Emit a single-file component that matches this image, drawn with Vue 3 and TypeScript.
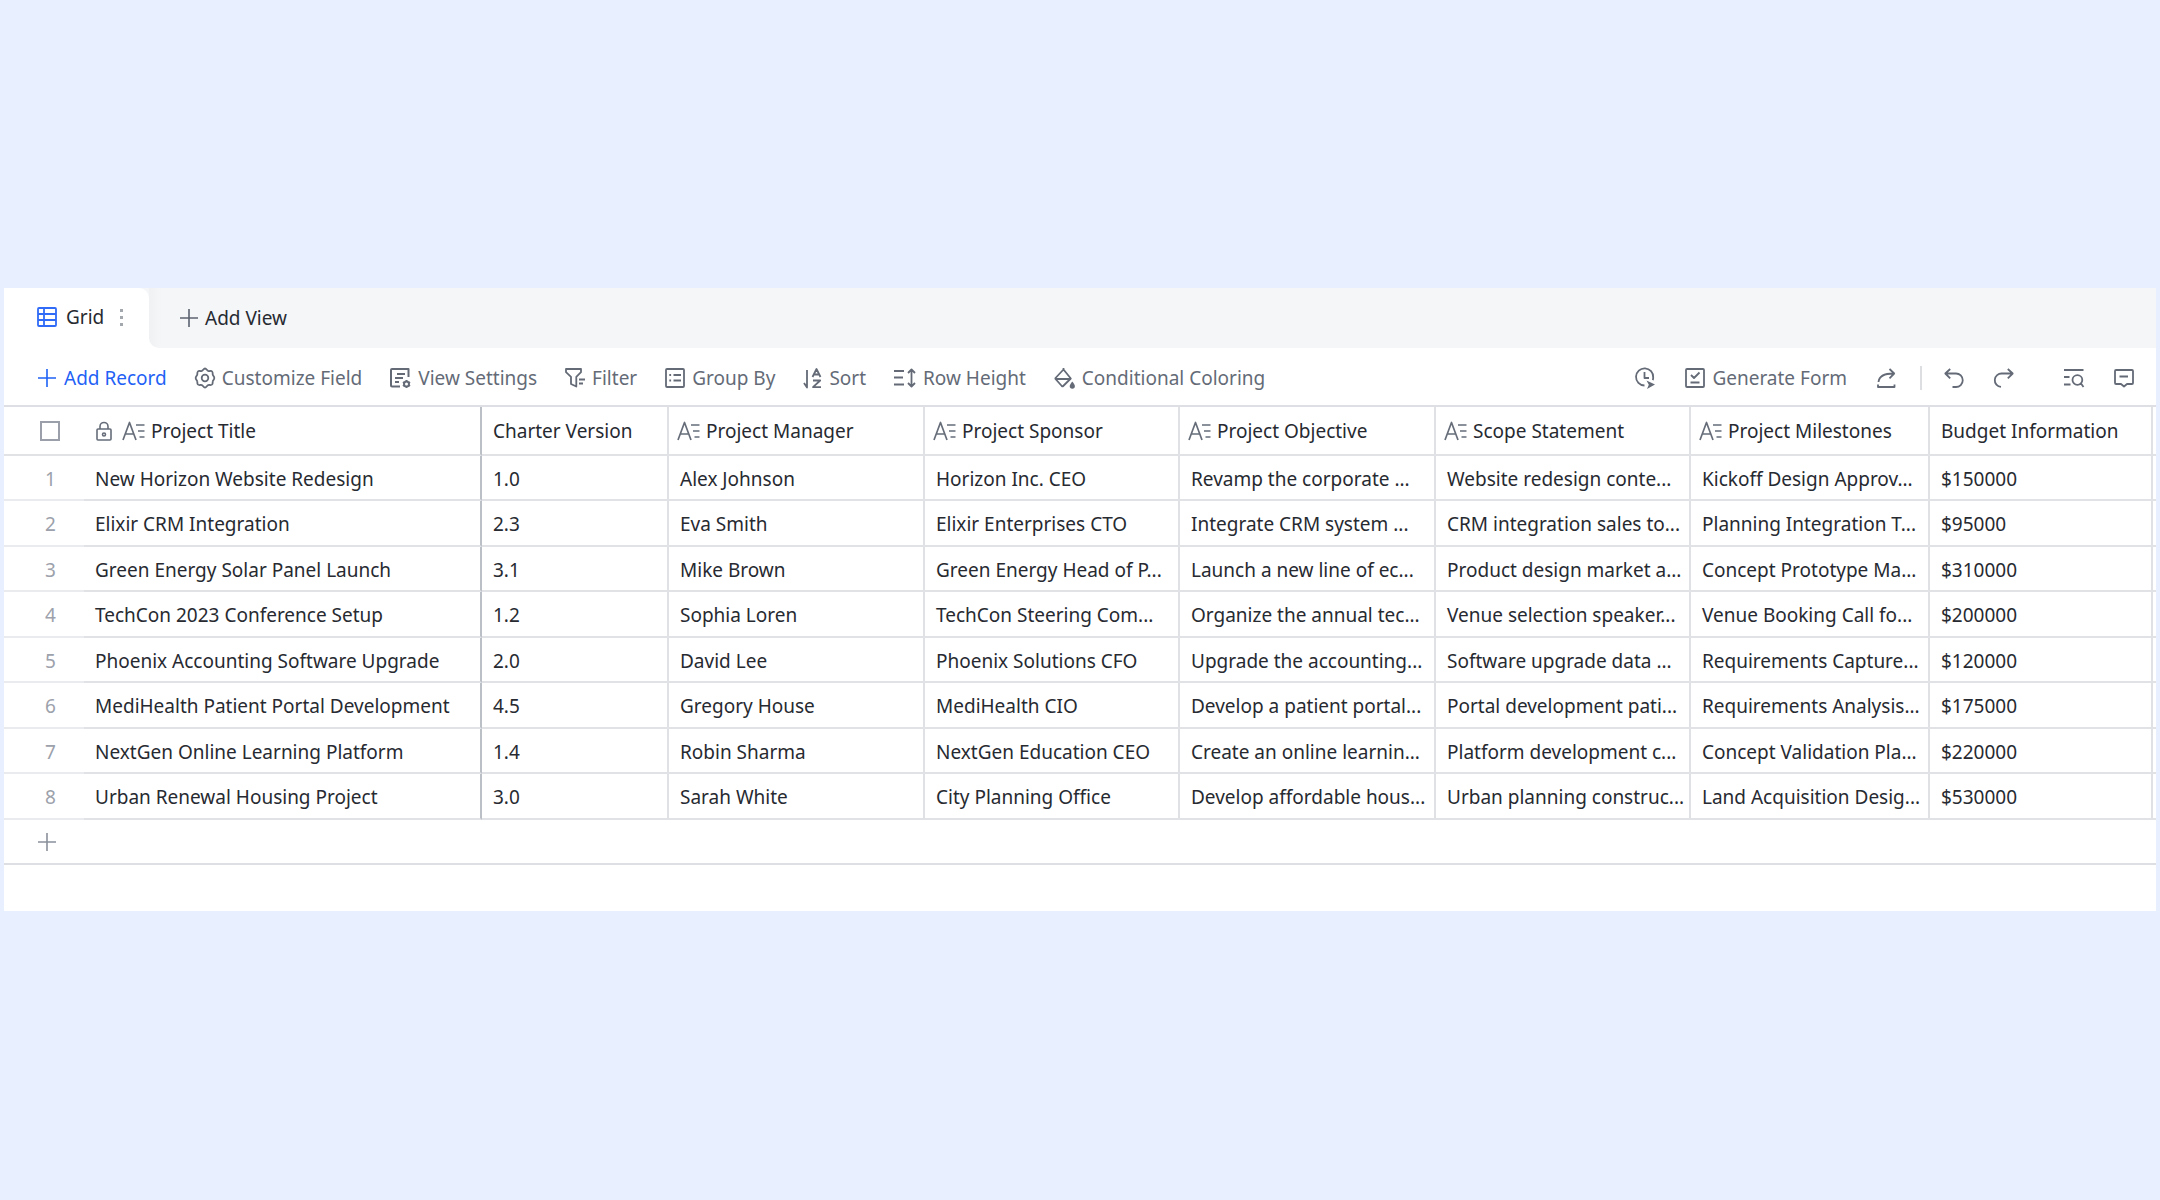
<script setup lang="ts">
import { h, ref } from 'vue'

interface Icon { w: number; h: number; d: string; fill?: string; sw?: number }
interface Column { key: string; label: string; width: number; text: boolean }
interface Action { icon: string; label: string }

const box = 'M2 1h16a1 1 0 0 1 1 1v16a1 1 0 0 1-1 1H2a1 1 0 0 1-1-1V2a1 1 0 0 1 1-1z'

const icons: Record<string, Icon> = {
  grid: { w: 20, h: 20, d: box + 'M1 7h18M1 13h18M7 1v18' },
  plus: { w: 20, h: 20, d: 'M10 1v18M1 10h18', sw: 1.6 },
  gear: { w: 20, h: 20, d: 'M10 .5c1.500 0 1.900 1.900 3.200 2.400 1.400.5 2.900-.5 3.900.6s.3 2.200.7 3.300c.4 1.200 1.500 1.800 1.500 3.200s-1.100 2-1.500 3.200c-.4 1.100.3 2.200-.7 3.300s-2.500.1-3.900.6c-1.300.5-1.700 2.400-3.200 2.400s-1.900-1.900-3.200-2.400c-1.400-.5-2.900.5-3.900-.6s-.3-2.200-.7-3.300C1.800 12 .7 11.400.7 10s1.100-2 1.500-3.200c.4-1.100-.3-2.200.7-3.300s2.500-.1 3.900-.6C8.100 2.400 8.500.5 10 .5zM13.300 10a3.300 3.300 0 1 1-6.600 0 3.300 3.300 0 0 1 6.600 0z' },
  settings: { w: 21, h: 20, d: 'M10 18.500H2a1 1 0 0 1-1-1V2a1 1 0 0 1 1-1h16.500v8M7 6h8M5 10h8M5 14h4M19 16a2.500 2.500 0 1 1-5 0 2.500 2.500 0 0 1 5 0zM16.500 12v1.500M16.500 18.500V20M13 14l1.300.8M18.700 17.200l1.300.8M13 18l1.300-.8M18.700 14.800L20 14', sw: 2 },
  filter: { w: 20, h: 20, d: 'M1 1h15v3.200l-4.700 4.600V18.500l-5.300-2.500V8.800L1 4.200zM14 11.500h6M14 15.500h4' },
  group: { w: 20, h: 20, d: box + 'M8.500 7H16M8.500 12.500H16M4.300 7h1.800M4.300 12.500h1.800' },
  sort: { w: 19, h: 20, d: 'M4 2v17.500L1 15M9.500 9l4-8 4 8M11 6.500h5M10 12.500h7.200l-7.200 6.600h8' },
  height: { w: 22, h: 20, d: 'M0 3h10M0 9.500h9M0 16.500h10M17.500 2v16M14 5l3.500-3.500L21 5M14 15l3.500 3.500L21 15' },
  bucket: { w: 21, h: 20, d: 'M9.500 1.500l-8 8.500a1 1 0 0 0 0 1l6.300 7a1 1 0 0 0 1.400 0l7.600-7.500zM9.500 1.500V0M1.500 11h15.500', fill: 'M18.300 13.500s2.600 3 2.600 4.600a2.600 2.600 0 0 1-5.200 0c0-1.600 2.600-4.600 2.600-4.600z' },
  clock: { w: 20, h: 22, d: 'M9.500 18.500A8.600 8.600 0 1 1 18.200 10.500c0 1-.1 1.800-.4 2.600M9.500 5v6h4.500', fill: 'M11.500 13.500l8.500 4-8 4.500 1.800-4.300z' },
  form: { w: 20, h: 20, d: box + 'M6 7l3 3 5.500-5.500M5.500 14.500h9' },
  share: { w: 19, h: 20, d: 'M1.500 14C2 8.500 7 5.500 16.500 5.500M12.500 1l4.700 4.500-4.700 4.800M1 16.500V19h16.500v-2.500' },
  undo: { w: 20, h: 20, d: 'M6.200 1L1.300 5.500l4.900 4.800M1.500 5.500H12a6.700 6.700 0 0 1 0 13.500H8.500' },
  redo: { w: 20, h: 20, d: 'M13.800 1l4.900 4.500-4.900 4.800M18.500 5.500H8a6.700 6.700 0 0 0-1 13.400' },
  search: { w: 20, h: 20, d: 'M0 2h19.500M0 9h5.500M0 16.500h6.500M18.300 12a4.900 4.900 0 1 1-9.800 0 4.900 4.900 0 0 1 9.800 0zM17 15.500l2.500 3.500' },
  comment: { w: 20, h: 20, d: 'M2 2h16a1 1 0 0 1 1 1v12a1 1 0 0 1-1 1h-5l-3 2.500L7 16H2a1 1 0 0 1-1-1V3a1 1 0 0 1 1-1zM5.500 8.500h8.500' },
  lock: { w: 16, h: 20, d: 'M2 8h12a1 1 0 0 1 1 1v9a1 1 0 0 1-1 1H2a1 1 0 0 1-1-1V9a1 1 0 0 1 1-1zM4 8V5.500a4 4 0 0 1 8 0V8M9.500 13.500a1.500 1.500 0 1 1-3 0 1.500 1.500 0 0 1 3 0z', sw: 1.6 },
  field: { w: 23, h: 20, d: 'M1 19L7.500 1.500 14 19M3.500 13h8M14 4h8.500M16 10h6.500M17.500 16h5', sw: 1.7 },
}

const actions: Action[] = [
  { icon: 'gear', label: 'Customize Field' },
  { icon: 'settings', label: 'View Settings' },
  { icon: 'filter', label: 'Filter' },
  { icon: 'group', label: 'Group By' },
  { icon: 'sort', label: 'Sort' },
  { icon: 'height', label: 'Row Height' },
  { icon: 'bucket', label: 'Conditional Coloring' },
]

const columns: Column[] = [
  { key: 'version', label: 'Charter Version', width: 187, text: false },
  { key: 'manager', label: 'Project Manager', width: 256, text: true },
  { key: 'sponsor', label: 'Project Sponsor', width: 255, text: true },
  { key: 'objective', label: 'Project Objective', width: 256, text: true },
  { key: 'scope', label: 'Scope Statement', width: 255, text: true },
  { key: 'milestones', label: 'Project Milestones', width: 239, text: true },
  { key: 'budget', label: 'Budget Information', width: 223, text: false },
]

const rows: string[][] = [
  ['New Horizon Website Redesign', '1.0', 'Alex Johnson', 'Horizon Inc. CEO', 'Revamp the corporate ...', 'Website redesign conte...', 'Kickoff Design Approv...', '$150000'],
  ['Elixir CRM Integration', '2.3', 'Eva Smith', 'Elixir Enterprises CTO', 'Integrate CRM system ...', 'CRM integration sales to...', 'Planning Integration T...', '$95000'],
  ['Green Energy Solar Panel Launch', '3.1', 'Mike Brown', 'Green Energy Head of P...', 'Launch a new line of ec...', 'Product design market a...', 'Concept Prototype Ma...', '$310000'],
  ['TechCon 2023 Conference Setup', '1.2', 'Sophia Loren', 'TechCon Steering Com...', 'Organize the annual tec...', 'Venue selection speaker...', 'Venue Booking Call fo...', '$200000'],
  ['Phoenix Accounting Software Upgrade', '2.0', 'David Lee', 'Phoenix Solutions CFO', 'Upgrade the accounting...', 'Software upgrade data ...', 'Requirements Capture...', '$120000'],
  ['MediHealth Patient Portal Development', '4.5', 'Gregory House', 'MediHealth CIO', 'Develop a patient portal...', 'Portal development pati...', 'Requirements Analysis...', '$175000'],
  ['NextGen Online Learning Platform', '1.4', 'Robin Sharma', 'NextGen Education CEO', 'Create an online learnin...', 'Platform development c...', 'Concept Validation Pla...', '$220000'],
  ['Urban Renewal Housing Project', '3.0', 'Sarah White', 'City Planning Office', 'Develop affordable hous...', 'Urban planning construc...', 'Land Acquisition Desig...', '$530000'],
]

const allSelected = ref(false)

const Glyph = (props: { name: string }) => {
  const i = icons[props.name]
  return h('svg', { width: i.w, height: i.h, viewBox: `0 0 ${i.w} ${i.h}`, 'aria-hidden': 'true' }, [
    h('path', { d: i.d, fill: 'none', stroke: 'currentColor', 'stroke-width': i.sw ?? 1.8, 'stroke-linejoin': 'round' }),
    i.fill ? h('path', { d: i.fill, fill: 'currentColor' }) : null,
  ])
}
Glyph.props = ['name']
</script>

<template>
  <main class="page">
    <section class="sheet">
      <nav class="tabs">
        <div class="tab">
          <button class="tab-name"><Glyph name="grid" class="blue" /><span>Grid</span></button>
          <button class="dots" aria-label="View options"><i></i><i></i><i></i></button>
        </div>
        <div class="tab-rest">
          <button class="add-view"><Glyph name="plus" class="gray" /><span>Add View</span></button>
        </div>
      </nav>

      <div class="toolbar">
        <div class="left">
          <button class="tool primary"><Glyph name="plus" /><span>Add Record</span></button>
          <button v-for="a in actions" :key="a.icon" class="tool"><Glyph :name="a.icon" /><span>{{ a.label }}</span></button>
        </div>
        <div class="right">
          <button class="tool" aria-label="Automations"><Glyph name="clock" /></button>
          <button class="tool"><Glyph name="form" /><span>Generate Form</span></button>
          <button class="tool" aria-label="Share"><Glyph name="share" /></button>
          <span class="divider"></span>
          <button class="tool" aria-label="Undo"><Glyph name="undo" /></button>
          <button class="tool" aria-label="Redo"><Glyph name="redo" /></button>
          <button class="tool find" aria-label="Search"><Glyph name="search" /></button>
          <button class="tool" aria-label="Comments"><Glyph name="comment" /></button>
        </div>
      </div>

      <div class="scroller">
        <table>
          <colgroup>
            <col style="width: 80px" />
            <col style="width: 398px" />
            <col v-for="c in columns" :key="c.key" :style="{ width: c.width + 'px' }" />
            <col />
          </colgroup>
          <thead>
            <tr>
              <th class="num"><input v-model="allSelected" type="checkbox" aria-label="Select all records" /></th>
              <th class="title">
                <span class="head"><Glyph name="lock" class="lock" /><Glyph name="field" /><span>Project Title</span></span>
              </th>
              <th v-for="c in columns" :key="c.key" :class="{ typed: c.text }">
                <span class="head"><Glyph v-if="c.text" name="field" /><span>{{ c.label }}</span></span>
              </th>
              <th class="rest"></th>
            </tr>
          </thead>
          <tbody>
            <tr v-for="(r, n) in rows" :key="n">
              <td class="num">{{ n + 1 }}</td>
              <td v-for="(v, k) in r" :key="k" :class="{ title: k === 0 }">{{ v }}</td>
              <td class="rest"></td>
            </tr>
          </tbody>
        </table>
      </div>

      <div class="new-row">
        <button aria-label="Add record"><Glyph name="plus" /></button>
      </div>
      <div class="foot"></div>
    </section>
  </main>
</template>

<style>
body {
  background: #e8f0ff;
}
</style>

<style scoped>
.page {
  min-height: 100vh;
  box-sizing: border-box;
  padding: 0 4px 1px;
  display: flex;
  flex-direction: column;
  justify-content: center;
  font: 19px/24px Tahoma, "Noto Sans", sans-serif;
  color: #272a31;
}
.sheet {
  background: #fff;
}
.sheet :deep(svg) {
  display: block;
  flex: none;
  overflow: visible;
}
button {
  margin: 0;
  padding: 0;
  border: 0;
  background: none;
  font: inherit;
  color: inherit;
  white-space: nowrap;
  cursor: pointer;
}
.tabs {
  display: flex;
  height: 60px;
  background: linear-gradient(#f4f6f8, #f4f6f8) 120px 0 / 100% 20px no-repeat;
}
.tab {
  display: flex;
  align-items: center;
  gap: 16px;
  width: 145px;
  box-sizing: border-box;
  padding: 0 0 2px 33px;
  background: #fff;
  border-top-right-radius: 10px;
}
.tab-name {
  display: flex;
  align-items: center;
  gap: 9px;
}
.dots {
  display: flex;
  flex-direction: column;
  gap: 4px;
}
.dots i {
  width: 3px;
  height: 3px;
  background: #a3a7ae;
}
.tab-rest {
  flex: 1;
  display: flex;
  align-items: center;
  padding-left: 30px;
  background: linear-gradient(90deg, #eff1f3, #f4f6f8 12px);
  border-bottom-left-radius: 10px;
}
.add-view {
  display: flex;
  align-items: center;
  gap: 6px;
}
.blue {
  color: #2f6bf6;
}
.gray {
  color: #5c6370;
}
.toolbar {
  display: flex;
  justify-content: space-between;
  align-items: center;
  box-sizing: border-box;
  height: 57px;
  padding-top: 2px;
  color: #646b77;
}
.left,
.right {
  display: flex;
  align-items: center;
}
.left {
  gap: 28px;
  padding-left: 33px;
}
.right {
  gap: 30px;
  padding-right: 22px;
}
.tool {
  display: flex;
  align-items: center;
  gap: 7px;
}
.primary {
  color: #1f62f5;
}
.divider {
  width: 2px;
  height: 24px;
  background: #dcdee2;
  margin-left: -6px;
  margin-right: -8px;
}
.find {
  margin-left: 20px;
}
.scroller {
  overflow-x: auto;
  border-top: 2px solid #dddfe4;
}
table {
  width: 100%;
  table-layout: fixed;
  border-collapse: separate;
  border-spacing: 0;
}
th,
td {
  box-sizing: border-box;
  padding: 0 0 0 11px;
  border-right: 2px solid #dfe1e5;
  border-bottom: 2px solid #e0e2e6;
  font-weight: 400;
  text-align: left;
  white-space: nowrap;
  overflow: hidden;
}
th {
  height: 49px;
}
td {
  height: 45px;
  padding-top: 2px;
}
tr:nth-child(even) td {
  height: 46px;
}
th.typed {
  padding-left: 8px;
}
th.title {
  padding-left: 12px;
}
.title {
  border-right-color: #bbc0c7;
}
.num {
  padding-left: 13px;
  border-right: 0;
  text-align: center;
  color: #9ca1ab;
}
td.num {
  border-bottom-color: #eaebee;
}
.rest {
  padding: 0;
  border-right: 0;
}
.head {
  display: flex;
  align-items: center;
  gap: 6px;
}
.head :deep(svg) {
  color: #666d79;
}
.lock {
  margin-right: 4px;
}
input[type='checkbox'] {
  appearance: none;
  display: block;
  box-sizing: border-box;
  width: 20px;
  height: 20px;
  margin: 0 0 0 23px;
  border: 2px solid #9a9fa9;
  background: #fff;
}
.new-row {
  display: flex;
  align-items: center;
  height: 43px;
  padding-left: 33px;
  border-bottom: 2px solid #dddfe4;
  color: #8a909b;
}
.foot {
  height: 46px;
}
</style>
